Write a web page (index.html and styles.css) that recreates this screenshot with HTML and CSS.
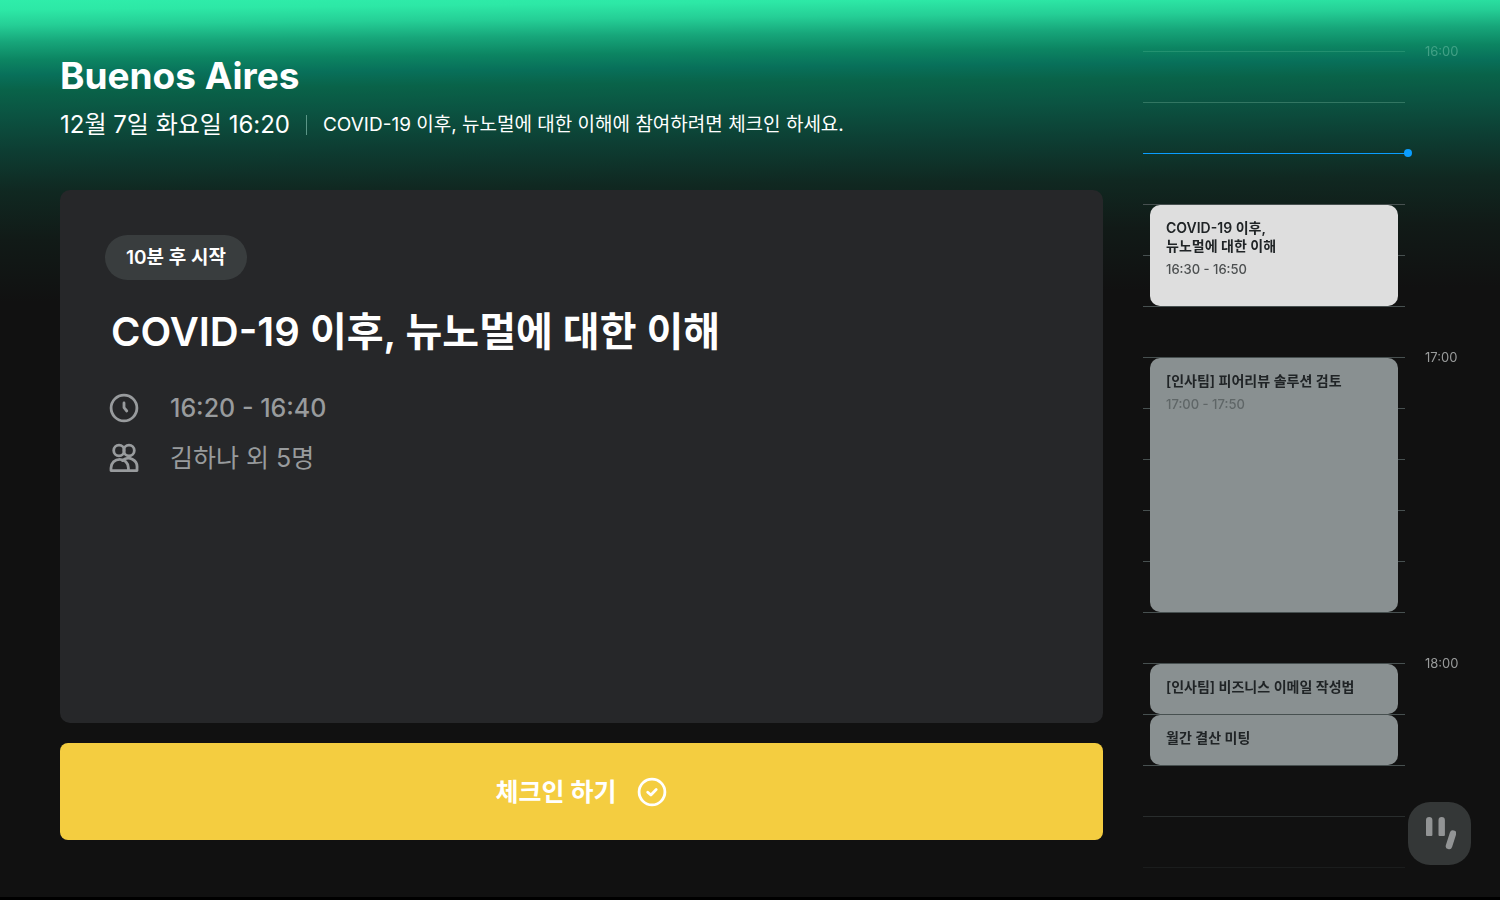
FILE: index.html
```html
<!DOCTYPE html>
<html lang="ko">
<head>
<meta charset="utf-8">
<meta name="viewport" content="width=device-width, initial-scale=1">
<title>Buenos Aires</title>
<link rel="stylesheet" href="styles.css">
</head>
<body>
<div class="screen">
  <main class="room">
    <header class="room-header">
      <h1 class="room-name">Buenos Aires</h1>
      <div class="room-status">
        <time class="now">12월 7일 화요일 16:20</time>
        <p class="notice">COVID-19 이후, 뉴노멀에 대한 이해에 참여하려면 체크인 하세요.</p>
      </div>
    </header>
    <section class="meeting">
      <span class="badge">10분 후 시작</span>
      <h2 class="meeting-title">COVID-19 이후, 뉴노멀에 대한 이해</h2>
      <ul class="details">
        <li class="detail">
          <svg class="icon" viewBox="0 0 30 30" aria-hidden="true"><circle cx="15" cy="15" r="12.9"/><path d="M15 10v4.6l2.800 3.400"/></svg>
          <span class="detail-time">16:20 - 16:40</span>
        </li>
        <li class="detail">
          <svg class="icon" viewBox="0 0 30 30" aria-hidden="true"><circle cx="10" cy="7.500" r="5.300"/><circle cx="20" cy="7.500" r="5.300"/><path d="M2 27.600v-2.600a8.700 8.700 0 0 1 17.400 0v2.600z"/><path d="M13.500 17.600a8.700 8.700 0 0 1 14.500 7.400v2.600h-8.600"/></svg>
          <span>김하나 외 5명</span>
        </li>
      </ul>
    </section>
    <button class="checkin" type="button">
      <span class="checkin-label">체크인 하기</span>
      <svg class="icon" viewBox="0 0 30 30" aria-hidden="true"><circle cx="15" cy="15" r="12.9"/><path d="M10.7 15.2l3.2 2.8 5.3-5.4"/></svg>
    </button>
  </main>
  <aside class="timeline" aria-label="일정">
    <div class="line line-1"></div>
    <div class="line line-2"></div>
    <div class="line line-3 line-now"></div>
    <div class="line line-4"></div>
    <div class="line line-5"></div>
    <div class="line line-6"></div>
    <div class="line line-7"></div>
    <div class="line line-8"></div>
    <div class="line line-9"></div>
    <div class="line line-10"></div>
    <div class="line line-11"></div>
    <div class="line line-12"></div>
    <div class="line line-13"></div>
    <div class="line line-14"></div>
    <div class="line line-15"></div>
    <div class="line line-16"></div>
    <div class="line line-17"></div>
    <time class="hour hour-16">16:00</time>
    <time class="hour hour-17">17:00</time>
    <time class="hour hour-18">18:00</time>
    <article class="event event-next">
      <h3 class="event-title">COVID-19 이후,<br>뉴노멀에 대한 이해</h3>
      <p class="event-time">16:30 - 16:50</p>
    </article>
    <article class="event event-review">
      <h3 class="event-title">[인사팀] 피어리뷰 솔루션 검토</h3>
      <p class="event-time">17:00 - 17:50</p>
    </article>
    <article class="event event-email">
      <h3 class="event-title">[인사팀] 비즈니스 이메일 작성법</h3>
    </article>
    <article class="event event-monthly">
      <h3 class="event-title">월간 결산 미팅</h3>
    </article>
  </aside>
  <button class="launcher" type="button" aria-label="메뉴">
    <svg class="launcher-mark" viewBox="0 0 32 34" aria-hidden="true"><path d="M2 18V3.200a3.200 3.200 0 0 1 6.400 0V18q0 1-1 1H3q-1 0-1-1zM14.500 18V3.200a3.200 3.200 0 0 1 6.400 0V18q0 1-1 1H15.500q-1 0-1-1z"/><path class="slash" d="M29 16.500L25 29"/></svg>
  </button>
</div>
</body>
</html>
```
FILE: styles.css
```css
* {
  box-sizing: border-box;
  margin: 0;
  padding: 0;
}

body {
  background: #111;
  color: #fff;
  font-family: Inter, "Noto Sans CJK KR", sans-serif;
}

button {
  border: 0;
  color: inherit;
  font-family: inherit;
  cursor: pointer;
}

.screen {
  position: relative;
  display: grid;
  grid-template-columns: minmax(0, 1fr) 317px;
  gap: 40px;
  min-height: 100vh;
  padding: 0 40px 0 60px;
  border-bottom: 3px solid #000;
  background: linear-gradient(179.4deg, #2fedaa 0, #2de8a6 10px, #25cf96 25px, #17a67a 42px, #0c8562 60px, #08705a 75px, #096349 90px, #0b5442 114px, #0d3e33 150px, #102821 192px, #111a17 240px, #111 302px);
}

.room {
  display: flex;
  flex-direction: column;
  padding: 52px 0 57px;
}

.room-name {
  font-size: 37px;
  font-weight: 700;
  line-height: 48px;
}

.room-status {
  display: flex;
  align-items: center;
  height: 50px;
  margin-bottom: 40px;
}

.now {
  padding-right: 16px;
  font-size: 24px;
  font-weight: 400;
  line-height: 32px;
}

.notice {
  padding-left: 16px;
  border-left: 1px solid #5b9687;
  font-size: 19px;
  font-weight: 400;
  line-height: 20px;
}

.meeting {
  display: flex;
  flex: 1;
  flex-direction: column;
  align-items: flex-start;
  margin-bottom: 20px;
  padding: 45px;
  border-radius: 10px;
  background: #262729;
}

.badge {
  padding: 0 21px;
  border-radius: 24px;
  background: #393d3e;
  font-size: 19px;
  font-weight: 600;
  line-height: 45px;
}

.meeting-title {
  margin: 22px 0 26px;
  padding-left: 6px;
  font-size: 40px;
  font-weight: 600;
  line-height: 60px;
}

.details {
  display: grid;
  gap: 10px;
  padding-left: 4px;
  color: #989b9d;
  font-size: 25px;
  line-height: 40px;
  list-style: none;
}

.detail {
  display: flex;
  align-items: center;
  gap: 31px;
}

.detail-time {
  font-weight: 500;
}

.icon {
  flex: none;
  width: 30px;
  height: 30px;
  fill: none;
  stroke: currentColor;
  stroke-width: 2.8;
  stroke-linecap: round;
  stroke-linejoin: round;
}

.checkin {
  display: flex;
  align-items: center;
  justify-content: center;
  gap: 21px;
  height: 97px;
  border-radius: 8px;
  background: #f4cd40;
}

.checkin-label {
  padding-bottom: 3px;
  font-size: 25px;
  font-weight: 700;
}

.timeline {
  display: grid;
  grid-template-columns: 262px 35px;
  grid-template-rows: repeat(17, 51px);
  column-gap: 20px;
  mask-image: linear-gradient(rgba(0, 0, 0, .4) 40px, rgba(0, 0, 0, .7) 102px, #000 150px, #000 770px, rgba(0, 0, 0, .45) 816px, rgba(0, 0, 0, .2) 867px);
}

.line {
  grid-column: 1;
  height: 1px;
  background: #475050;
}

.line-1 { grid-row: 2; background: #3fa883; }
.line-2 { grid-row: 3; background: #438570; }
.line-3 { grid-row: 4; }
.line-4 { grid-row: 5; }
.line-5 { grid-row: 6; }
.line-6 { grid-row: 7; }
.line-7 { grid-row: 8; }
.line-8 { grid-row: 9; }
.line-9 { grid-row: 10; }
.line-10 { grid-row: 11; }
.line-11 { grid-row: 12; }
.line-12 { grid-row: 13; }
.line-13 { grid-row: 14; }
.line-14 { grid-row: 15; }
.line-15 { grid-row: 16; }
.line-16 { grid-row: 17; }
.line-17 { grid-row: 18; }

.line-now {
  position: relative;
  background: #0a9dff;
}

.line-now::after {
  position: absolute;
  top: -4px;
  right: -7px;
  width: 8px;
  height: 8px;
  border-radius: 50%;
  background: #0a9dff;
  content: "";
}

.hour {
  grid-column: 2;
  align-self: center;
  color: #9a9c9c;
  font-size: 13px;
  line-height: 16px;
}

.hour-16 {
  grid-row: 1 / 3;
  color: #83cdb5;
}

.hour-17 { grid-row: 7 / 9; }
.hour-18 { grid-row: 13 / 15; }

.event {
  grid-column: 1;
  margin: 1px 7px 0;
  padding: 14px 16px;
  border-radius: 10px;
  background: #899091;
  color: #202426;
}

.event-next {
  grid-row: 5 / 7;
  background: #dedede;
}

.event-review { grid-row: 8 / 13; }
.event-email { grid-row: 14; }
.event-monthly { grid-row: 15; }

.event-title {
  font-size: 14px;
  font-weight: 600;
  line-height: 18px;
}

.event-time {
  margin-top: 5px;
  color: #5f6667;
  font-size: 13px;
  font-weight: 500;
  line-height: 18px;
}

.event-next .event-time {
  color: #4c4f50;
}

.launcher {
  position: absolute;
  right: 29px;
  bottom: 32px;
  display: grid;
  place-items: center;
  width: 63px;
  height: 63px;
  border-radius: 22px;
  background: #343737;
}

.launcher-mark {
  width: 32px;
  height: 34px;
  fill: #929495;
}

.slash {
  stroke: #929495;
  stroke-width: 6.5;
  stroke-linecap: round;
}
```
